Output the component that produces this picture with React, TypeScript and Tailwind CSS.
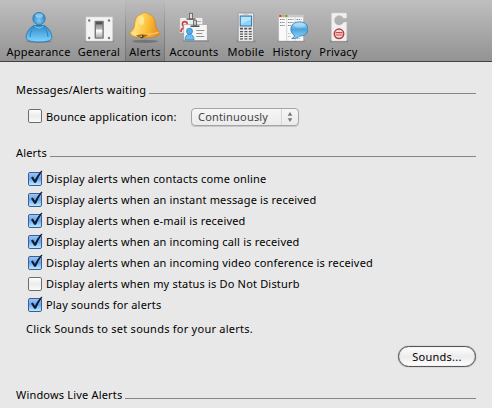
import type { ReactNode } from 'react'

function PersonIcon() {
  return (
    <svg width="32" height="32" viewBox="0 0 32 32">
      <defs>
        <linearGradient id="body" x1="0" y1="0" x2="0" y2="1">
          <stop offset="0" stopColor="#2f86c4" />
          <stop offset="0.5" stopColor="#55b0e8" />
          <stop offset="1" stopColor="#86d4fb" />
        </linearGradient>
        <radialGradient id="head" cx="0.5" cy="0.65" r="0.6">
          <stop offset="0" stopColor="#7fcbf6" />
          <stop offset="1" stopColor="#2c7fbe" />
        </radialGradient>
      </defs>
      <ellipse cx="16" cy="30.5" rx="13" ry="1.5" fill="#555" opacity="0.35" />
      <path d="M11 14.5 C6 17 3.2 22 3.2 26.5 C3.2 29.5 8 31 16 31 C24 31 28.8 29.5 28.8 26.5 C28.8 22 26 17 21 14.5 Z" fill="url(#body)" stroke="#2878b2" strokeWidth="0.9" />
      <path d="M9 19 Q7 22 7 26 M23 19 Q25 22 25 26" fill="none" stroke="#2c80bc" strokeWidth="1" />
      <circle cx="16" cy="7.6" r="6.2" fill="url(#head)" stroke="#2878b2" strokeWidth="0.8" />
      <ellipse cx="16" cy="4.6" rx="4" ry="2.4" fill="#b5e1f8" opacity="0.6" />
      <path d="M11.5 15 Q16 19 20.5 15" fill="none" stroke="#a8def9" strokeWidth="1" opacity="0.7" />
    </svg>
  )
}

function SwitchIcon() {
  return (
    <svg width="32" height="32" viewBox="0 0 32 32">
      <defs>
        <linearGradient id="lever" x1="0" y1="0" x2="0" y2="1">
          <stop offset="0" stopColor="#777" />
          <stop offset="0.45" stopColor="#bbb" />
          <stop offset="0.55" stopColor="#fff" />
          <stop offset="1" stopColor="#aaa" />
        </linearGradient>
      </defs>
      <rect x="2" y="29" width="29" height="2.2" fill="#666" opacity="0.4" />
      <rect x="3" y="6" width="26.5" height="24" fill="#f3f3f3" stroke="#d5d5d5" strokeWidth="0.6" />
      <rect x="11.6" y="9.8" width="9.2" height="18" rx="0.8" fill="#777" />
      <rect x="13" y="11" width="6.4" height="15.6" fill="url(#lever)" />
      <path d="M13 11 h6.4 v2.4 h-6.4z" fill="#333" opacity="0.6" />
      <path d="M13.4 19.5 h5.6" stroke="#fff" strokeWidth="1.2" />
      <g fill="#777">
        <circle cx="6.2" cy="9.5" r="1.2" />
        <circle cx="26" cy="9.5" r="1.2" />
        <circle cx="6.2" cy="27" r="1.2" />
        <circle cx="26" cy="27" r="1.2" />
      </g>
    </svg>
  )
}

function BellIcon() {
  return (
    <svg width="32" height="32" viewBox="0 0 32 32">
      <defs>
        <linearGradient id="bell" x1="0" y1="0" x2="1" y2="0.2">
          <stop offset="0" stopColor="#e8951a" />
          <stop offset="0.3" stopColor="#ffe07a" />
          <stop offset="0.65" stopColor="#fdbf3a" />
          <stop offset="1" stopColor="#ea931f" />
        </linearGradient>
      </defs>
      <ellipse cx="16" cy="30.3" rx="13" ry="1.6" fill="#444" opacity="0.4" />
      <path d="M16 1.8 C17.8 1.8 19 2.2 19.6 3.2 C25 4.4 26.2 9 26.5 14 C26.7 17.8 28.8 19 31 21.6 C31.6 24.4 27 26.6 16 26.6 C5 26.6 0.4 24.4 1 21.6 C3.2 19 5.3 17.8 5.5 14 C5.8 9 7 4.4 12.4 3.2 C13 2.2 14.2 1.8 16 1.8Z" fill="url(#bell)" stroke="#ce790c" strokeWidth="0.5" />
      <path d="M2.4 21 Q8 24 16 23.4 Q25 23.4 29.6 21" fill="none" stroke="#fff0a6" strokeWidth="1.2" opacity="0.65" />
      <path d="M7 24.6 Q12 22.2 19 23.8 Q17 26.5 12 26.4 Q8 26.2 7 24.6Z" fill="#b8690b" />
      <circle cx="12.8" cy="25.6" r="1.8" fill="#5b3a12" />
      <circle cx="12.2" cy="25.2" r="0.9" fill="#f4c256" />
      <ellipse cx="12.5" cy="9.5" rx="2.6" ry="4.6" fill="#fff3b5" opacity="0.6" />
    </svg>
  )
}

function BadgesIcon() {
  return (
    <svg width="32" height="32" viewBox="0 0 32 32">
      <rect x="5" y="29" width="26" height="2" fill="#666" opacity="0.35" />
      <rect x="1.8" y="6.5" width="23" height="15.5" fill="#eeeeee" stroke="#aaa" strokeWidth="0.6" />
      <circle cx="6.8" cy="13" r="2.4" fill="none" stroke="#cf4545" strokeWidth="1.6" />
      <path d="M3 21 Q3 16.8 7 16.8" fill="none" stroke="#cf4545" strokeWidth="1.8" />
      <path d="M17 10.5 h6" stroke="#999" strokeWidth="0.8" />
      <rect x="11.5" y="2.3" width="3" height="6" fill="#ddd" stroke="#666" strokeWidth="0.9" />
      <path d="M8.5 8 h9" stroke="#555" strokeWidth="1.3" />
      <rect x="5.8" y="13.4" width="23.4" height="16" fill="#f5f5f5" stroke="#999" strokeWidth="0.6" />
      <circle cx="11.5" cy="20.2" r="3" fill="#54aeea" stroke="#2f83c0" strokeWidth="0.8" />
      <path d="M7 28.8 Q7 23.5 11.5 23.5 Q16 23.5 16 28.8Z" fill="#6cc0f3" stroke="#2f83c0" strokeWidth="0.8" />
      <path d="M18.3 19.5 h8 M18.3 22.5 h6 M18.3 25.5 h8" stroke="#777" strokeWidth="0.8" />
      <path d="M15.5 9.3 h3 v5 h-3z" fill="#ccc" stroke="#555" strokeWidth="0.8" />
      <path d="M12.5 15.2 h9" stroke="#444" strokeWidth="1.4" />
    </svg>
  )
}

function PhoneIcon() {
  return (
    <svg width="32" height="32" viewBox="0 0 32 32">
      <rect x="6.5" y="29.5" width="19" height="1.7" fill="#555" opacity="0.4" />
      <rect x="8.2" y="2" width="15.4" height="28.4" rx="1.2" fill="#ececec" stroke="#8f8f8f" strokeWidth="0.8" />
      <rect x="10.2" y="5" width="11.4" height="10" fill="#8fd2f7" stroke="#2e74aa" strokeWidth="1" />
      <path d="M11 6 h9.8 v2.5 L11 13z" fill="#c8ecff" opacity="0.7" />
      <path d="M13.5 3.3 h5" stroke="#aaa" strokeWidth="0.6" />
      <path d="M10 17.6 h3 M18.5 17.6 h3 M14.2 17.6 h3" stroke="#555" strokeWidth="1.7" />
      <path d="M10 20.7 h11.8 M10 23.1 h11.8 M10 25.5 h11.8 M10 27.9 h11.8" stroke="#555" strokeWidth="1.2" strokeDasharray="3 1.4" />
    </svg>
  )
}

function HistoryIcon() {
  return (
    <svg width="32" height="32" viewBox="0 0 32 32">
      <defs>
        <linearGradient id="bubble" x1="0" y1="0" x2="0" y2="1">
          <stop offset="0" stopColor="#aadcf7" />
          <stop offset="0.45" stopColor="#4ea4dd" />
          <stop offset="1" stopColor="#90d5fa" />
        </linearGradient>
      </defs>
      <rect x="1.5" y="29.3" width="27" height="1.8" fill="#555" opacity="0.35" />
      <rect x="2.8" y="4" width="24.5" height="26" fill="#fafafa" stroke="#bbb" strokeWidth="0.5" />
      <rect x="2.8" y="3.8" width="24.5" height="2.6" fill="#c9c9c9" />
      <rect x="3.2" y="4" width="2.2" height="2" fill="#d43d32" />
      <rect x="6.2" y="4" width="2.2" height="2" fill="#e5a52c" />
      <rect x="9.2" y="4" width="2.2" height="2" fill="#62a536" />
      <path d="M10.7 6.4 v23.4 M19.2 6.4 v23.4" stroke="#bbb" strokeWidth="0.6" />
      <path d="M4 8.5 h5 M4 11.5 h5 M4 14.5 h5 M12 8.5 h5.5 M12 11.5 h5.5 M12 14.5 h3 M20.5 8.5 h5" stroke="#7f8984" strokeWidth="1" strokeDasharray="1.5 0.7" />
      <path d="M12 22.5 h3 M12 25.5 h3 M20.5 27.5 h4" stroke="#aaa" strokeWidth="0.8" strokeDasharray="1.5 0.7" />
      <path d="M15.7 27.6 C18 26.7 18.6 25.3 18.2 24 C15.8 22.6 14.9 20.5 14.9 18.2 C14.9 13.8 18.5 10.8 23.6 10.8 C28.7 10.8 32 13.9 32 18 C32 22.7 28 25.2 23.8 25 C22 26.7 19 28 15.7 27.6Z" fill="url(#bubble)" stroke="#2b76ad" strokeWidth="0.8" />
      <ellipse cx="23.5" cy="14.3" rx="6" ry="2.4" fill="#fff" opacity="0.3" />
    </svg>
  )
}

function DoorHangerIcon() {
  return (
    <svg width="32" height="32" viewBox="0 0 32 32">
      <rect x="7" y="29.5" width="18" height="1.7" fill="#555" opacity="0.4" />
      <path d="M9.5 2 H22.7 Q23.7 2 23.7 3 V7 L20.6 7.3 A4.9 4.9 0 1 0 20.6 11.3 L23.7 11 V29 Q23.7 30 22.7 30 H9.5 Q8.5 30 8.5 29 V3 Q8.5 2 9.5 2Z" fill="#f0f0f0" stroke="#d0d0d0" strokeWidth="0.5" />
      <circle cx="16" cy="22.8" r="4.7" fill="#f6d9d9" stroke="#b93b3b" strokeWidth="1.5" />
      <path d="M12.6 21.7 h6.8 M12.6 24 h6.8" stroke="#c94b4b" strokeWidth="1.2" />
    </svg>
  )
}

interface Tab {
  label: string
  width: string
  icon: ReactNode
}

const TABS: Tab[] = [
  { label: 'Appearance', width: 'w-[69px]', icon: <PersonIcon /> },
  { label: 'General', width: 'w-[52px]', icon: <SwitchIcon /> },
  { label: 'Alerts', width: 'w-[40px]', icon: <BellIcon /> },
  { label: 'Accounts', width: 'w-[58px]', icon: <BadgesIcon /> },
  { label: 'Mobile', width: 'w-[46px]', icon: <PhoneIcon /> },
  { label: 'History', width: 'w-[46px]', icon: <HistoryIcon /> },
  { label: 'Privacy', width: 'w-[47px]', icon: <DoorHangerIcon /> },
]

const OPTIONS = [
  { label: 'Display alerts when contacts come online', checked: true },
  { label: 'Display alerts when an instant message is received', checked: true },
  { label: 'Display alerts when e-mail is received', checked: true },
  { label: 'Display alerts when an incoming call is received', checked: true },
  { label: 'Display alerts when an incoming video conference is received', checked: true },
  { label: 'Display alerts when my status is Do Not Disturb', checked: false },
  { label: 'Play sounds for alerts', checked: true },
]

function Checkbox({ checked }: { checked: boolean }) {
  return (
    <svg width="16" height="17" viewBox="0 0 16 17" className="shrink-0">
      <defs>
        <linearGradient id="boxOn" x1="0" y1="0" x2="0" y2="1">
          <stop offset="0" stopColor="#a3c8f2" />
          <stop offset="0.45" stopColor="#66a6ec" />
          <stop offset="1" stopColor="#bdf0ff" />
        </linearGradient>
        <linearGradient id="boxOff" x1="0" y1="0" x2="0" y2="1">
          <stop offset="0" stopColor="#ffffff" />
          <stop offset="0.5" stopColor="#ececec" />
          <stop offset="1" stopColor="#fbfbfb" />
        </linearGradient>
      </defs>
      <rect x="0.5" y="2.5" width="13" height="13" rx="1.4" fill={checked ? 'url(#boxOn)' : 'url(#boxOff)'} stroke={checked ? '#3c5c9c' : '#6c6c6c'} />
      {checked && <path d="M3 7.6 L4.9 6.6 L6.9 9.8 Q9.5 4.6 13.2 0.8 L14.5 1 Q10.5 6.6 8 12.8 L6.2 12.8 Z" fill="#101c33" />}
    </svg>
  )
}

function SectionTitle({ children }: { children: ReactNode }) {
  return (
    <div className="flex h-4 items-center">
      <h2 className="whitespace-nowrap">{children}</h2>
      <div className="mt-[7px] ml-[3px] h-px flex-1 bg-[#858585]" />
    </div>
  )
}

export default function App() {
  return (
    <div className="h-[408px] w-[492px] overflow-hidden bg-[#e8e8e8] font-['Noto_Sans',sans-serif] text-[11px] leading-4 font-normal tracking-[0.18px] text-black">
      <header className="flex h-[62px] border-b border-[#444044] bg-linear-to-b from-[#bfbfbf] to-[#939393] pl-[4px] tracking-[0.25px]">
        {TABS.map((tab) => {
          const active = tab.label === 'Alerts'
          return (
            <button
              key={tab.label}
              className={`h-[61px] shrink-0 ${tab.width} ${active ? 'bg-linear-to-b from-[#bdbdbd] via-[#888] to-[#707070] px-px' : ''}`}
            >
              <span
                className={`flex h-full flex-col items-center pt-[11px] ${
                  active ? 'bg-linear-to-b from-[#bcbcbc] via-[#a3a3a3] to-[#828282]' : ''
                }`}
              >
                {tab.icon}
                <span className="mt-px whitespace-nowrap">{tab.label}</span>
              </span>
            </button>
          )
        })}
      </header>

      <main className="pt-[20px] pr-4 pl-4">
        <SectionTitle>Messages/Alerts waiting</SectionTitle>
        <div className="mt-[10px] flex h-[18px] items-center pl-3">
          <div className="mb-[3px]">
            <Checkbox checked={false} />
          </div>
          <span className="ml-[2px] w-[145px]">Bounce application icon:</span>
          <button className="flex h-[18px] w-[108px] items-center rounded-[4px] border border-[#a5a5a5] bg-linear-to-b from-[#f6f6f6] to-[#ebebeb] pl-[6px] text-left text-[#444] shadow-[0_1px_0_#c8c8c8]">
            <span className="flex-1">Continuously</span>
            <span className="flex h-full w-[17px] items-center justify-center border-l border-[#d6d6d6]">
              <svg width="6" height="10" viewBox="0 0 6 10" fill="#777">
                <path d="M3 0 L5.3 3.8 H0.7Z M3 10 L5.3 6.2 H0.7Z" />
              </svg>
            </span>
          </button>
        </div>

        <div className="mt-[19px]">
          <SectionTitle>Alerts</SectionTitle>
        </div>
        <ul className="mt-[7px] pl-3">
          {OPTIONS.map((o) => (
            <li key={o.label} className="flex h-[21px] items-center">
              <Checkbox checked={o.checked} />
              <span className="ml-[2px] whitespace-nowrap">{o.label}</span>
            </li>
          ))}
        </ul>
        <p className="mt-[6px] pl-[10px] tracking-[0.25px]">Click Sounds to set sounds for your alerts.</p>
        <div className="mt-[9px] flex justify-end">
          <button className="h-[21px] w-[78px] rounded-full border border-[#555] bg-linear-to-b from-white via-[#ececec] to-white tracking-[0.25px] shadow-[0_0_1px_#555,inset_0_0_1px_#777]">
            Sounds...
          </button>
        </div>
        <div className="mt-[20px]">
          <SectionTitle>Windows Live Alerts</SectionTitle>
        </div>
      </main>
    </div>
  )
}
